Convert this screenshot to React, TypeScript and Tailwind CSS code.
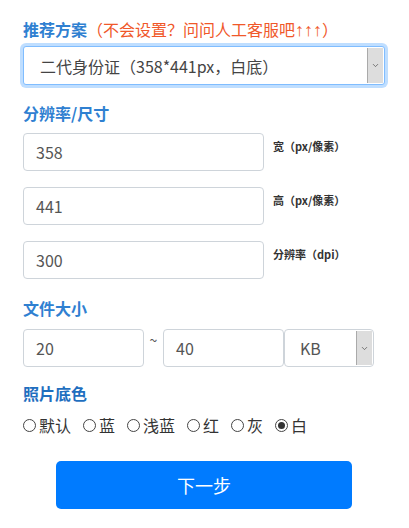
import { ChevronDown } from "lucide-react";

const font = { fontFamily: '"Noto Sans CJK SC", "Noto Sans", sans-serif' };

function Arrow() {
  return (
    <div className="w-[16px] self-stretch bg-[#dddddd] border-l border-[#aaaaaa] flex items-center justify-center">
      <ChevronDown className="w-[9px] h-[9px] text-[#555]" strokeWidth={2} />
    </div>
  );
}

function Box({ value, className }: { value: string; className?: string }) {
  return (
    <div className={"h-[38px] rounded-[4px] border border-[#ced4da] bg-white flex items-center pl-[12px] text-[16px] text-[#555] " + (className || "")}>
      {value}
    </div>
  );
}

const colors = ["默认", "蓝", "浅蓝", "红", "灰", "白"];

export default function App() {
  return (
    <div className="w-[409px] h-[528px] bg-white pl-[23px] pt-[17px]" style={font}>
      <div className="h-[24px] flex items-center text-[16px]">
        <span className="font-bold text-[#2f80d1]">推荐方案</span>
        <span className="text-[#f0582a]">
          （不会设置？问问人工客服吧
          <span className="text-[18px] leading-[16px]" style={{ fontFamily: '"Liberation Sans", sans-serif' }}>↑↑↑</span>）
        </span>
      </div>

      <div className="mt-[5px] w-[362px] h-[39px] rounded-[3px] border border-[#80bdff] shadow-[0_0_0_3px_rgba(0,123,255,0.25)] bg-white flex items-center">
        <span className="flex-1 pl-[16px] text-[16px] text-[#444]">二代身份证（358*441px，白底）</span>
        <div className="self-stretch py-[1px] pr-[1px] flex"><Arrow /></div>
      </div>

      <div className="mt-[16px] h-[24px] flex items-center text-[16px] font-bold text-[#2f80d1]">分辨率/尺寸</div>

      <div className="mt-[8px] flex flex-col gap-[16px]">
        {[["358", "宽（px/像素）"], ["441", "高（px/像素）"], ["300", "分辨率（dpi）"]].map(([v, l]) => (
          <div key={l} className="flex items-start">
            <Box value={v} className="w-[241px]" />
            <span className="ml-[9px] mt-[5px] text-[11px] font-bold text-[#333]">{l}</span>
          </div>
        ))}
      </div>

      <div className="mt-[17px] h-[24px] flex items-center text-[16px] font-bold text-[#2f80d1]">文件大小</div>

      <div className="mt-[9px] flex items-start">
        <Box value="20" className="w-[121px]" />
        <span className="w-[19px] text-center text-[14px] text-[#555] leading-[20px] mt-[1px]">~</span>
        <Box value="40" className="w-[121px]" />
        <div className="w-[90px] h-[38px] rounded-[4px] border border-[#ced4da] bg-white flex items-center">
          <span className="flex-1 pl-[15px] text-[16px] text-[#555]">KB</span>
          <div className="self-stretch py-[1px] pr-[1px] flex"><Arrow /></div>
        </div>
      </div>

      <div className="mt-[14px] h-[24px] flex items-center text-[16px] font-bold text-[#1f6fbf]">照片底色</div>

      <div className="mt-[8px] flex items-center text-[16px] text-[#333] gap-[12px]">
        {colors.map((c, i) => (
          <label key={c} className="flex items-center gap-[3px]">
            <span className="w-[13px] h-[13px] rounded-full border border-[#444] flex items-center justify-center">
              {i === 5 && <span className="w-[7px] h-[7px] rounded-full bg-[#333]" />}
            </span>
            <span>{c}</span>
          </label>
        ))}
      </div>

      <button className="mt-[24px] ml-[33px] w-[296px] h-[48px] rounded-[5px] bg-[#007bff] text-white text-[18px] flex items-center justify-center">
        下一步
      </button>
    </div>
  );
}
